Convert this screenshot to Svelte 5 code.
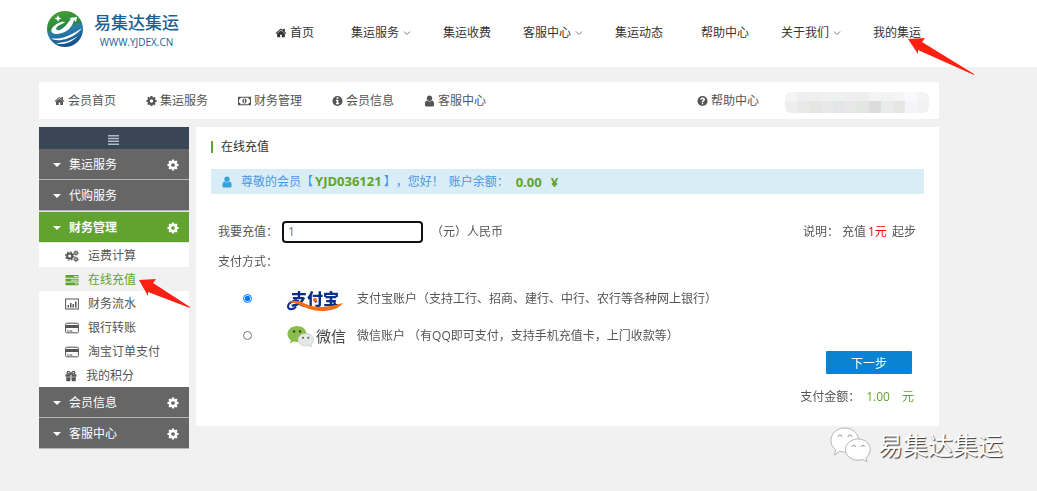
<script>
	import { onMount } from 'svelte';

	let amount = '1';
	let amountInput = null;
	let pay = 'alipay';

	const topNav = [
		{ text: '首页', icon: 'home' },
		{ text: '集运服务', more: true },
		{ text: '集运收费' },
		{ text: '客服中心', more: true },
		{ text: '集运动态', wide: true },
		{ text: '帮助中心' },
		{ text: '关于我们', more: true },
		{ text: '我的集运' }
	];

	const subNav = [
		{ text: '会员首页', icon: 'home' },
		{ text: '集运服务', icon: 'cog' },
		{ text: '财务管理', icon: 'money' },
		{ text: '会员信息', icon: 'info' },
		{ text: '客服中心', icon: 'user' }
	];

	const menu = [
		{ text: '集运服务', cog: true },
		{ text: '代购服务' },
		{
			text: '财务管理',
			cog: true,
			open: true,
			items: [
				{ text: '运费计算', icon: 'cogs' },
				{ text: '在线充值', icon: 'tasks', active: true },
				{ text: '财务流水', icon: 'chart' },
				{ text: '银行转账', icon: 'card' },
				{ text: '淘宝订单支付', icon: 'card' },
				{ text: '我的积分', icon: 'gift' }
			]
		},
		{ text: '会员信息', cog: true },
		{ text: '客服中心', cog: true }
	];

	// masked account name
	const mask = [
		'#f3f4f4', '#eeefee', '#eef0f0', '#f0f0ef', '#eff0f0', '#edeeee', '#edeeed', '#f3f4f4', '#f2f3f3', '#f4f5f4', '#fafafc', '#f3f5f5',
		'#eeeeee', '#e9e9ea', '#e5e5e4', '#e8e8e8', '#e4e5e8', '#e7e7e7', '#e4e6e4', '#dcdcdd', '#eaeceb', '#e6e6e5', '#f5f5f9', '#f2f2f2'
	];

	onMount(() => {
		amountInput.focus();
		amountInput.setSelectionRange(0, 0);
	});

	$: total = (Number(amount) || 0).toFixed(2);
</script>

{#snippet icon(name)}
	{#if name == 'home'}
		<svg class="ico" viewBox="0 0 1792 1792"><path d="M1472 992v480q0 26-19 45t-45 19h-384v-384h-256v384h-384q-26 0-45-19t-19-45v-480q0-1 .5-3t.5-3l575-474 575 474q1 2 1 6zm223-69l-62 74q-8 9-21 11h-3q-13 0-21-7l-692-577-692 577q-12 8-24 7-13-2-21-11l-62-74q-8-10-7-23.5t11-21.5l719-599q32-26 76-26t76 26l244 204v-195q0-14 9-23t23-9h192q14 0 23 9t9 23v408l219 182q10 8 11 21.5t-7 23.5z"/></svg>
	{:else if name == 'cog'}
		<svg class="ico" viewBox="64 64 1664 1664"><path d="M1152 896q0-106-75-181t-181-75-181 75-75 181 75 181 181 75 181-75 75-181zm512-109v222q0 12-8 23t-20 13l-185 28q-19 54-39 91 35 50 107 138 10 12 10 25t-9 23q-27 37-99 108t-94 71q-12 0-26-9l-138-108q-44 23-91 38-16 136-29 186-7 28-36 28h-222q-14 0-24.5-8.5t-11.5-21.5l-28-184q-49-16-90-37l-141 107q-10 9-25 9-14 0-25-11-126-114-165-168-7-10-7-23 0-12 8-23 15-21 51-66.5t54-70.5q-27-50-41-99l-183-27q-13-2-21-12.5t-8-23.5v-222q0-12 8-23t19-13l186-28q14-46 39-92-40-57-107-138-10-12-10-24 0-10 9-23 26-36 98.5-107.5t94.5-71.5q13 0 26 10l138 107q44-23 91-38 16-136 29-186 7-28 36-28h222q14 0 24.5 8.5t11.5 21.5l28 184q49 16 90 37l142-107q9-9 24-9 13 0 25 10 129 119 165 170 7 8 7 22 0 12-8 23-15 21-51 66.5t-54 70.5q26 50 41 98l183 28q13 2 21 12.5t8 23.5z"/></svg>
	{:else if name == 'user'}
		<svg class="ico" viewBox="128 64 1536 1664"><path d="M1536 1399q0 109-62.5 187t-150.5 78h-854q-88 0-150.5-78t-62.5-187q0-85 8.5-160.5t31.5-152 58.5-131 94-89 134.5-34.5q131 128 313 128t313-128q76 0 134.5 34.5t94 89 58.5 131 31.5 152 8.5 160.5zm-256-887q0 159-112.5 271.5t-271.5 112.5-271.5-112.5-112.5-271.5 112.5-271.5 271.5-112.5 271.5 112.5 112.5 271.5z"/></svg>
	{:else if name == 'money'}
		<svg class="ico wide" viewBox="0 0 14 12"><path fill-rule="evenodd" d="M0 1.5h14v9H0zM2.8 2.6a1.8 1.8 0 0 1-1.7 1.7v3.4a1.8 1.8 0 0 1 1.7 1.7h8.4a1.8 1.8 0 0 1 1.7-1.7V4.300a1.8 1.8 0 0 1-1.7-1.7z"/><path fill-rule="evenodd" d="M7 3.200c1.400 0 2.300 1.200 2.300 2.800S8.400 8.800 7 8.800 4.700 7.600 4.700 6 5.600 3.200 7 3.200zM6 4.900v.6h.500v1.800H6v.700h2v-.7h-.500V4.200h-.6z"/></svg>
	{:else if name == 'info'}
		<svg class="ico" viewBox="0 0 12 12"><circle cx="6" cy="6" r="5.500"/><path class="cut" d="M5 2h2v1.500H5zM4.300 4.600h2.600v3.600h.8v1.300H4.300V8.200h.8V5.900h-.8z"/></svg>
	{:else if name == 'help'}
		<svg class="ico" viewBox="0 0 12 12"><circle cx="6" cy="6" r="5.500"/><path class="cut" d="M5.200 8h1.600v1.500H5.200zM3.500 4.400C3.800 2.900 4.800 2.200 6.100 2.200c1.500 0 2.600.9 2.600 2.200 0 1.100-.7 1.500-1.300 1.900-.5.300-.6.500-.6 1H5.200c0-1.300.5-1.700 1.100-2.100.5-.3.700-.5.700-.8 0-.4-.4-.7-.9-.7-.6 0-.9.300-1.300.900z"/></svg>
	{:else if name == 'cogs'}
		<svg class="ico wide" viewBox="0 0 14 12"><circle class="line" cx="4.700" cy="6" r="2.600" stroke-width="2"/><circle class="line" cx="4.700" cy="6" r="4.100" stroke-width="1.200" stroke-dasharray="1.610 1.610"/><circle class="line" cx="11" cy="3" r="1.400" stroke-width="1.200"/><circle class="line" cx="11" cy="3" r="2.300" stroke-width=".8" stroke-dasharray=".9 .9"/><circle class="line" cx="11" cy="9.200" r="1.400" stroke-width="1.200"/><circle class="line" cx="11" cy="9.200" r="2.300" stroke-width=".8" stroke-dasharray=".9 .9"/></svg>
	{:else if name == 'tasks'}
		<svg class="ico wide" viewBox="0 0 14 12"><path d="M.5 1h13v2.800H.5zM.5 4.700h13v2.800H.5zM.5 8.400h13v2.800H.5z"/><path class="cut" d="M9 2h3.700v.8H9zM6 5.700h6.700v.8H6zM10 9.400h2.700v.8H10z"/></svg>
	{:else if name == 'chart'}
		<svg class="ico wide" viewBox="0 0 14 12"><rect class="line" x=".6" y="1" width="12.800" height="10"/><path d="M2.500 7H4v2.500H2.500zM5 5h1.500v4.500H5zM7.500 6H9v3.500H7.500zM10 3.500h1.500v6H10z"/></svg>
	{:else if name == 'card'}
		<svg class="ico wide" viewBox="0 0 14 12"><rect class="line" x=".6" y="1.200" width="12.800" height="9.600" rx="1"/><path d="M.6 3h12.800v3H.6zM2 8.500h1.800v1H2zM4.500 8.500h2.800v1H4.500z"/></svg>
	{:else if name == 'gift'}
		<svg class="ico" viewBox="0 0 12 12"><path d="M.5 4.300h4.700v2.500H.5zM6.800 4.300h4.700v2.500H6.800zM1.200 7.200h4v4h-3a1 1 0 0 1-1-1zM6.800 7.200h4v3a1 1 0 0 1-1 1h-3z"/><path d="M5.200 4.300h1.600v5.900H5.200z" opacity=".45"/><path class="line" stroke-width="1.300" d="M5.700 4C5.200 2.300 4.400 1.400 3.500 1.400S2 2.200 2.200 2.900 3.400 4 5.700 4zM6.300 4c.5-1.700 1.300-2.600 2.200-2.600s1.500.8 1.300 1.500S8.600 4 6.300 4z"/></svg>
	{/if}
{/snippet}

<div class="page">
	<header>
		<a class="logo" href="#home">
			<svg width="38" height="38" viewBox="0 0 38 38">
				<defs>
					<linearGradient id="ball" x1="0" y1="0" x2=".3" y2="1">
						<stop offset="0" stop-color="#4fa62f"/>
						<stop offset=".5" stop-color="#2c8540"/>
						<stop offset=".62" stop-color="#2b7fae"/>
						<stop offset="1" stop-color="#17548c"/>
					</linearGradient>
				</defs>
				<circle cx="19" cy="19" r="18" fill="url(#ball)"/>
				<path fill="#fff" d="M7 17c-3 3-2 7 3 7 8 0 16-5 18-14l2 2 1-5-8 1 2 1c-4 5-7 9-11 11-3 1-5-1-3-3 3-3 6-3 8-5-4-1-9 2-12 5z"/>
				<path fill="#fff" d="M5 28c7 2 18-1 31-10-5 7-13 11-21 12-4 .6-8 0-10-2zM10 33c7 0 14-2 22-7-5 5-11 8-17 8-2 0-3 0-5-1zM12 5l1 2.500 2.500 1L13 9.500 12 12l-1-2.500-2.500-1 2.500-1z"/>
			</svg>
			<span class="brand">
				<strong>易集达集运</strong>
				<span>WWW.YJDEX.CN</span>
			</span>
		</a>
		<nav>
			{#each topNav as item}
				<a href="#nav" class:pad={item.wide}>
					{#if item.icon}{@render icon(item.icon)}{/if}
					<span>{item.text}</span>
					{#if item.more}
						<svg class="chev" viewBox="0 0 8 8"><path d="M1 2.500l3 3 3-3"/></svg>
					{/if}
				</a>
			{/each}
		</nav>
	</header>

	<main>
		<nav class="subnav">
			{#each subNav as item}
				<a href="#sub">{@render icon(item.icon)}<span>{item.text}</span></a>
			{/each}
			<a class="help" href="#help">{@render icon('help')}<span>帮助中心</span></a>
			<div class="mask">
				{#each mask as color}
					<i style="background:{color}"></i>
				{/each}
			</div>
		</nav>

		<div class="cols">
			<aside>
				<button class="fold" aria-label="菜单">
					<svg width="11" height="10" viewBox="0 0 11 10"><path d="M0 0h11v1.500H0zM0 2.800h11v1.500H0zM0 5.600h11v1.500H0zM0 8.400h11v1.500H0z"/></svg>
				</button>
				{#each menu as group}
					<a class="group" class:open={group.open} href="#group">
						<svg class="caret" viewBox="0 0 8 4"><path d="M0 0h8L4 4z"/></svg>
						<span>{group.text}</span>
						{#if group.cog}{@render icon('cog')}{/if}
					</a>
					{#if group.items}
						<ul>
							{#each group.items as item}
								<li>
									<a href="#item" class:active={item.active}>{@render icon(item.icon)}<span>{item.text}</span></a>
								</li>
							{/each}
						</ul>
					{/if}
				{/each}
			</aside>

			<section>
				<h1>在线充值</h1>
				<div class="alert">
					{@render icon('user')}
					<span>尊敬的会员【<b>YJD036121</b>】，您好！</span>
					<span>账户余额：</span>
					<b>0.00</b>
					<b>¥</b>
				</div>

				<form on:submit|preventDefault>
					<div class="row">
						<label for="amount">我要充值：</label>
						<input type="text" id="amount" bind:this={amountInput} bind:value={amount}/>
						<span>（元）人民币</span>
						<span class="note">说明： 充值<em>1元</em> 起步</span>
					</div>
					<div class="row">支付方式：</div>

					<div class="way first">
						<input type="radio" id="alipay" value="alipay" bind:group={pay}/>
						<label for="alipay">
							<span class="payLogo alipay">
								<b>支付宝</b>
								<svg viewBox="0 0 58 22">
									<path d="M12 11C6 10 1 13 1 16.500c0 3.500 6 3.500 8 0" fill="none" stroke="#0c2f8c" stroke-width="2"/>
									<path d="M2 13c4-4 11-2 17 1 9 4 20 4 37-1-4 6-13 8-21 8-13 0-21-6-27-8-2-.6-5-1-6 0z" fill="#f46f14"/>
									<circle cx="28" cy="10" r="2" fill="#f46f14"/>
								</svg>
							</span>
							<span>支付宝账户（支持工行、招商、建行、中行、农行等各种网上银行）</span>
						</label>
					</div>
					<div class="way">
						<input type="radio" id="wechat" value="wechat" bind:group={pay}/>
						<label for="wechat">
							<span class="payLogo wechat">
								<svg width="27" height="22" viewBox="0 0 27 22">
									<path d="M10 1c5.500 0 9.500 3.600 9.500 8s-4 8-9.500 8c-1.300 0-2.500-.2-3.600-.5L3 18.500l.8-3.300C1.700 13.700.5 11.500.5 9c0-4.400 4-8 9.500-8z" fill="#8bbd4e"/>
									<path d="M18.700 8.500c4.300 0 7.800 2.700 7.800 6.200 0 2-1 3.600-2.700 4.700l.6 2.400-2.700-1.400c-1 .3-2 .4-3 .4-4.300 0-7.700-2.600-7.700-6.100s3.400-6.200 7.700-6.200z" fill="#e6e8e8" stroke="#b9bdbd" stroke-width=".6"/>
									<circle cx="7" cy="6.500" r="1.200" fill="#314519"/><circle cx="13" cy="6.500" r="1.200" fill="#314519"/>
									<circle cx="16" cy="12.800" r="1" fill="#555"/><circle cx="21.300" cy="12.800" r="1" fill="#555"/>
								</svg>
								<span>微信</span>
							</span>
							<span>微信账户 （有QQ即可支付，支持手机充值卡，上门收款等）</span>
						</label>
					</div>

					<div class="done">
						<button type="submit">下一步</button>
						<p>支付金额：<span>{total}</span><span>元</span></p>
					</div>
				</form>
			</section>
		</div>
	</main>

	<!-- pointers and watermark over the page -->
	<svg class="arrow top" viewBox="0 0 66 37"><path d="M0 1l17-1-3 4 52 32v1L10 12v4z"/></svg>
	<svg class="arrow side" viewBox="0 0 51 29"><path d="M0 1l17-1-3 4 37 24v1L9 13v4z"/></svg>
	<div class="watermark">
		<svg width="41" height="36" viewBox="0 0 41 36">
			<path d="M14.500 1C22.500 1 28.500 6.500 28.500 13.500S22.500 25 14.500 25c-2 0-3.500-.2-5-.7L4.500 28l1.200-5.400C2.500 20.500 1 17.500 1 13.500 1 6.500 7 1 14.500 1z"/>
			<path d="M28 12c7 0 12.200 4.700 12.200 10.500 0 3.300-1.600 6.200-4.200 8.200l1 4-4.200-2.300c-1.500.5-3 .8-4.800.8-7 0-12.500-4.700-12.500-10.700S21 12 28 12z"/>
			<path class="eye" d="M8 10a2 2 0 0 1 4 0M18 10a2 2 0 0 1 4 0M22 20a1.700 1.700 0 0 1 3.400 0M31 20a1.700 1.700 0 0 1 3.400 0"/>
		</svg>
		<span>易集达集运</span>
	</div>
</div>

<style>
	:global(body) {
		background: #f1f1f1;
	}

	.page {
		position: relative;
		min-height: 100vh;
		background: #f1f1f1;
		color: #555;
		font: 12px/24px "Open Sans", "Noto Sans CJK SC", sans-serif;
		text-spacing-trim: space-all;
	}

	a {
		color: inherit;
		text-decoration: none;
	}

	.ico {
		width: 12px;
		height: 12px;
		flex: none;
		fill: currentColor;
	}
	.ico.wide {
		width: 14px;
	}
	.cut {
		fill: #fff;
	}
	.line {
		fill: none;
		stroke: currentColor;
	}

	header {
		display: flex;
		height: 67px;
		padding-left: 46px;
		background: #fff;
		color: #333;
	}

	.logo {
		display: flex;
		gap: 10px;
		width: 229px;
		padding-top: 10px;
		box-sizing: border-box;
		color: #1c5f93;
	}
	.brand {
		display: flex;
		flex-direction: column;
		align-items: center;
	}
	.brand strong {
		font-size: 17px;
		font-weight: 500;
		line-height: 25px;
	}
	.brand span {
		font-family: "Open Sans", sans-serif;
		font-size: 10px;
		line-height: 14px;
	}

	header nav {
		display: flex;
		gap: 32px;
		align-items: center;
		height: 65px;
		white-space: nowrap;
	}
	header nav a {
		display: flex;
		align-items: center;
		gap: 4px;
	}
	header nav a:first-child {
		gap: 3px;
		padding-right: 5px;
	}
	.pad {
		padding-right: 6px;
	}
	.chev {
		width: 8px;
		height: 8px;
		fill: none;
		stroke: #777;
	}
	nav a:hover {
		color: #62a32f;
	}

	main {
		padding: 15px 98px 0 39px;
	}

	.subnav {
		display: flex;
		align-items: center;
		gap: 30px;
		height: 37px;
		padding: 0 10px 0 15px;
		background: #fff;
		white-space: nowrap;
	}
	.subnav a {
		display: flex;
		align-items: center;
		gap: 3px;
	}
	.subnav .ico {
		width: 11px;
	}
	.subnav .ico.wide {
		width: 13px;
	}
	.subnav .help {
		margin-left: auto;
	}
	.mask {
		display: grid;
		grid-template-columns: repeat(12, 12px);
		grid-template-rows: 9px 12px;
		margin: 4px 0 0 -4px;
		border-radius: 6px;
		overflow: hidden;
	}

	.cols {
		display: flex;
		align-items: flex-start;
		gap: 7px;
		margin-top: 8px;
	}

	aside {
		width: 150px;
		flex: none;
		background: #fff;
	}
	.fold {
		display: flex;
		justify-content: center;
		align-items: flex-end;
		width: 100%;
		height: 22px;
		padding: 0 2px 4px 0;
		border: 0;
		background: #3a4556;
	}
	.fold svg {
		fill: #b0bccb;
	}
	.group {
		display: flex;
		align-items: center;
		height: 28px;
		padding: 2px 10px 0 14px;
		border-bottom: 1px solid #b5b5b5;
		background: #666;
		color: #fff;
	}
	.group.open {
		border-top: 1px solid #e4e4e4;
		border-bottom-color: #e4e4e4;
		background: #62a32f;
		font-weight: bold;
	}
	.group span {
		flex: 1;
	}
	.caret {
		width: 8px;
		height: 4px;
		margin-right: 8px;
		fill: #fff;
	}
	ul {
		margin: 0;
		padding: 0;
		list-style: none;
	}
	li a {
		display: flex;
		align-items: center;
		gap: 9px;
		height: 22px;
		padding: 2px 0 0 26px;
	}
	li a.active {
		background: #f1f1f1;
		color: #62a32f;
	}

	section {
		flex: 1;
		min-width: 0;
		padding: 8px 15px 17px;
		background: #fff;
	}
	h1 {
		display: flex;
		align-items: center;
		gap: 8px;
		margin: 0;
		color: #333;
		font-size: 12px;
		font-weight: normal;
	}
	h1::before {
		content: "";
		width: 2px;
		height: 12px;
		background: #62a32f;
	}
	.alert {
		display: flex;
		align-items: center;
		gap: 5px;
		height: 25px;
		margin: 10px 0 23px;
		padding-left: 10px;
		background: #d9edf7;
		color: #4a96e8;
	}
	.alert .ico {
		margin-right: 3px;
		color: #35a3dc;
	}
	.alert b {
		margin: 0 2px;
		color: #62a32f;
		font-size: 13px;
	}

	.row {
		display: flex;
		align-items: center;
		height: 30px;
		padding: 0 8px 0 7px;
	}
	.row label {
		width: 64px;
	}
	.row input {
		width: 141px;
		height: 22px;
		margin-right: 8px;
		padding: 0 4px;
		box-sizing: border-box;
		border: 2px solid #111;
		border-radius: 4px;
		outline: none;
		color: #777;
		font: inherit;
	}
	.note {
		margin-left: auto;
	}
	em {
		margin: 0 2px;
		color: #f00;
		font-style: normal;
	}

	.way {
		display: flex;
		align-items: center;
		height: 37px;
		padding-left: 32px;
	}
	.way.first {
		margin-top: 3px;
	}
	.way input {
		width: 9px;
		height: 9px;
		margin: 0 35px 0 0;
	}
	.way label {
		display: flex;
		align-items: center;
	}
	.payLogo {
		position: relative;
		display: flex;
		align-items: center;
		width: 70px;
	}
	.alipay b {
		padding-left: 4px;
		color: #0c2f8c;
		font-size: 16px;
		font-weight: 900;
		line-height: 22px;
	}
	.alipay svg {
		position: absolute;
		left: 0;
		top: 2px;
		width: 58px;
		height: 22px;
	}
	.wechat {
		gap: 2px;
		color: #444;
		font-size: 15px;
	}

	.done {
		display: flex;
		flex-direction: column;
		align-items: flex-end;
		margin-top: -3px;
		padding-right: 10px;
	}
	.done button {
		width: 86px;
		height: 23px;
		margin-right: 2px;
		border: 0;
		border-radius: 1px;
		background: #0a84d2;
		color: #fff;
		font: inherit;
	}
	.done p {
		margin: 11px 0 0;
	}
	.done span {
		margin-left: 6px;
		color: #62a32f;
	}
	.done span:last-child {
		margin-left: 12px;
	}

	.arrow {
		position: absolute;
		fill: #fc1f12;
	}
	.arrow.top {
		left: 908px;
		top: 38px;
		width: 66px;
		height: 37px;
	}
	.arrow.side {
		left: 139px;
		top: 279px;
		width: 51px;
		height: 29px;
	}

	.watermark {
		position: absolute;
		right: 34px;
		bottom: 28px;
		display: flex;
		align-items: center;
		gap: 7px;
		color: #fff;
		font-size: 25px;
		line-height: 36px;
		text-shadow: 1px 1px 1px #333;
	}
	.watermark path {
		fill: #fff;
		stroke: #999;
		stroke-width: .7;
	}
	.watermark .eye {
		fill: none;
		stroke: #777;
	}
</style>
